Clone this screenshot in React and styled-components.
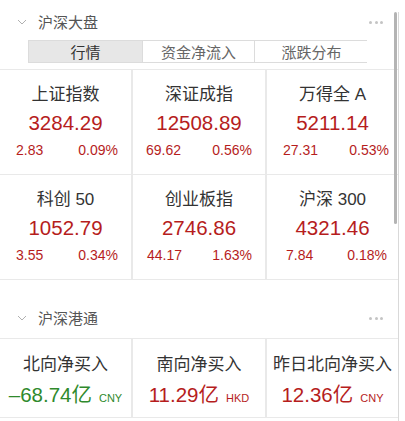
import React from "react";
import styled, { createGlobalStyle } from "styled-components";

const Global = createGlobalStyle`
  html, body { margin: 0; padding: 0; background: #fff; }
  body { font-family: "Liberation Sans", "Noto Sans CJK SC", sans-serif; }
`;

const Page = styled.div`
  position: relative;
  width: 398px;
  min-height: 421px;
  border-right: 1px solid #d9d9d9;
  background: #fff;
`;

const ScrollThumb = styled.div`
  position: absolute;
  top: 0;
  right: 1px;
  width: 3px;
  height: 212px;
  border-radius: 2px;
  background: #b4b4b4;
`;

const SectionHeader = styled.div`
  display: flex;
  align-items: center;
  height: 20px;
  padding: 0 14px 0 17px;
  margin-top: ${(p) => p.$top}px;
  margin-bottom: ${(p) => p.$bottom}px;
`;

const Chevron = styled.svg`
  width: 10px;
  height: 6px;
  margin-right: 11px;
  flex: none;
`;

const SectionTitle = styled.span`
  flex: 1;
  font-family: "Noto Sans CJK SC", sans-serif;
  font-size: 15px;
  line-height: 20px;
  color: #555;
`;

const Dots = styled.div`
  display: flex;
  gap: 2.5px;
  margin-right: 1px;
  span {
    width: 3px;
    height: 3px;
    border-radius: 50%;
    background: #c4c4c4;
  }
`;

const Tabs = styled.div`
  display: grid;
  grid-template-columns: 113px 112px 114px;
  margin: 0 0 6px 28px;
  width: 339px;
  height: 23px;
  border: 1px solid #dcdcdc;
  box-sizing: border-box;
`;

const Tab = styled.div`
  display: flex;
  align-items: center;
  justify-content: center;
  font-family: "Noto Sans CJK SC", sans-serif;
  font-size: 15px;
  color: ${(p) => (p.$active ? "#333" : "#666")};
  background: ${(p) => (p.$active ? "#e7e7e7" : "#fff")};
  border-left: ${(p) => (p.$first ? "none" : "1px solid #dcdcdc")};
`;

const Grid = styled.div`
  display: grid;
  grid-template-columns: 131px 132px 131px;
  column-gap: 2px;
  row-gap: 1px;
  background: #e9e9e9;
  border-top: 1px solid #e9e9e9;
  border-bottom: 1px solid #e9e9e9;
`;

const Cell = styled.div`
  background: #fff;
  height: ${(p) => p.$h}px;
  box-sizing: border-box;
  padding-top: ${(p) => p.$pt}px;
  display: flex;
  flex-direction: column;
  align-items: center;
`;

const CellTitle = styled.div`
  font-size: 17px;
  line-height: 24px;
  color: #333;
  white-space: nowrap;
`;

const Value = styled.div`
  font-size: 20.5px;
  line-height: 28px;
  margin-top: ${(p) => p.$mt}px;
  color: ${(p) => (p.$down ? "#2f8a2c" : "#b61d1d")};
  white-space: nowrap;
  display: flex;
  align-items: baseline;
`;

const Unit = styled.span`
  font-size: 11px;
  margin-left: 7px;
`;

const SubRow = styled.div`
  align-self: stretch;
  display: flex;
  justify-content: space-between;
  padding: 0 ${(p) => p.$pr}px 0 ${(p) => p.$pl}px;
  margin-top: 3px;
  font-size: 14px;
  line-height: 20px;
  color: #b61d1d;
`;

const indices = [
  { name: "上证指数", value: "3284.29", chg: "2.83", pct: "0.09%", pl: 16, pr: 13 },
  { name: "深证成指", value: "12508.89", chg: "69.62", pct: "0.56%", pl: 13, pr: 13 },
  { name: "万得全 A", value: "5211.14", chg: "27.31", pct: "0.53%", pl: 16, pr: 9 },
  { name: "科创 50", value: "1052.79", chg: "3.55", pct: "0.34%", pl: 16, pr: 13 },
  { name: "创业板指", value: "2746.86", chg: "44.17", pct: "1.63%", pl: 14, pr: 13 },
  { name: "沪深 300", value: "4321.46", chg: "7.84", pct: "0.18%", pl: 19, pr: 11 },
];

const flows = [
  { name: "北向净买入", value: "–68.74亿", unit: "CNY", down: true },
  { name: "南向净买入", value: "11.29亿", unit: "HKD" },
  { name: "昨日北向净买入", value: "12.36亿", unit: "CNY" },
];

function Header({ title, top, bottom }) {
  return (
    <SectionHeader $top={top} $bottom={bottom}>
      <Chevron viewBox="0 0 10 6">
        <polyline points="1,1 5,5 9,1" fill="none" stroke="#b0b0b0" strokeWidth="1" />
      </Chevron>
      <SectionTitle>{title}</SectionTitle>
      <Dots>
        <span />
        <span />
        <span />
      </Dots>
    </SectionHeader>
  );
}

export default function App() {
  return (
    <>
      <Global />
      <Page>
        <Header title="沪深大盘" top={12} bottom={8} />
        <Tabs>
          <Tab $active $first>行情</Tab>
          <Tab>资金净流入</Tab>
          <Tab>涨跌分布</Tab>
        </Tabs>
        <Grid>
          {indices.map((it) => (
            <Cell key={it.name} $h={104} $pt={13}>
              <CellTitle>{it.name}</CellTitle>
              <Value $mt={2}>{it.value}</Value>
              <SubRow $pl={it.pl} $pr={it.pr}>
                <span>{it.chg}</span>
                <span>{it.pct}</span>
              </SubRow>
            </Cell>
          ))}
        </Grid>
        <Header title="沪深港通" top={28} bottom={10} />
        <Grid>
          {flows.map((it) => (
            <Cell key={it.name} $h={78} $pt={14}>
              <CellTitle>{it.name}</CellTitle>
              <Value $mt={4} $down={it.down}>
                {it.value}
                <Unit>{it.unit}</Unit>
              </Value>
            </Cell>
          ))}
        </Grid>
        <ScrollThumb />
      </Page>
    </>
  );
}
